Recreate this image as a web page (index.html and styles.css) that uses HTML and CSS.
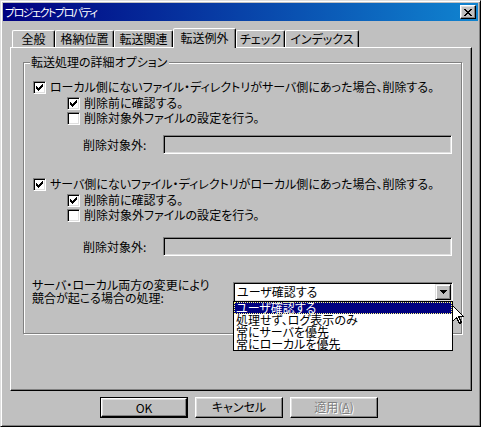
FILE: index.html
```html
<!DOCTYPE html>
<html lang="ja">
<head>
    <meta charset="UTF-8">
    <title>プロジェクトプロパティ</title>
    <link rel="stylesheet" href="styles.css">
</head>
<body>
    <div class="window">
        <div class="titlebar">
            <span class="title">プロジェクトプロパティ</span>
            <span class="close-btn">
                <svg width="8" height="7" viewBox="0 0 8 7" shape-rendering="crispEdges">
                    <path d="M0 0h2v1H0z M6 0h2v1H6z M1 1h2v1H1z M5 1h2v1H5z M2 2h4v1H2z M3 3h2v1H3z M2 4h4v1H2z M1 5h2v1H1z M5 5h2v1H5z M0 6h2v1H0z M6 6h2v1H6z" fill="#000"/>
                </svg>
            </span>
        </div>

        <div class="content">
            <div class="tabs">
                <div class="tab tab-general">全般</div>
                <div class="tab tab-store">格納位置</div>
                <div class="tab tab-transfer">転送関連</div>
                <div class="tab tab-except active">転送例外</div>
                <div class="tab tab-check">チェック</div>
                <div class="tab tab-index">インデックス</div>
            </div>

            <div class="panel">
                <div class="group">
                    <span class="group-title">転送処理の詳細オプション</span>

                    <div class="check-row main first">
                        <span class="cb checked"><svg width="7" height="7" viewBox="0 0 7 7" shape-rendering="crispEdges"><path d="M0 2h1v3H0z M1 3h1v3H1z M2 4h1v3H2z M3 3h1v3H3z M4 2h1v3H4z M5 1h1v3H5z M6 0h1v3H6z" fill="#000"/></svg></span>
                        <span>ローカル側にないファイル・ディレクトリがサーバ側にあった場合、削除する。</span>
                    </div>
                    <div class="check-row sub top">
                        <span class="cb checked"><svg width="7" height="7" viewBox="0 0 7 7" shape-rendering="crispEdges"><path d="M0 2h1v3H0z M1 3h1v3H1z M2 4h1v3H2z M3 3h1v3H3z M4 2h1v3H4z M5 1h1v3H5z M6 0h1v3H6z" fill="#000"/></svg></span>
                        <span>削除前に確認する。</span>
                    </div>
                    <div class="check-row sub">
                        <span class="cb"></span>
                        <span>削除対象外ファイルの設定を行う。</span>
                    </div>
                    <div class="field-row first">
                        <span class="field-label">削除対象外:</span>
                        <span class="edit"></span>
                    </div>

                    <div class="check-row main second">
                        <span class="cb checked"><svg width="7" height="7" viewBox="0 0 7 7" shape-rendering="crispEdges"><path d="M0 2h1v3H0z M1 3h1v3H1z M2 4h1v3H2z M3 3h1v3H3z M4 2h1v3H4z M5 1h1v3H5z M6 0h1v3H6z" fill="#000"/></svg></span>
                        <span>サーバ側にないファイル・ディレクトリがローカル側にあった場合、削除する。</span>
                    </div>
                    <div class="check-row sub top">
                        <span class="cb checked"><svg width="7" height="7" viewBox="0 0 7 7" shape-rendering="crispEdges"><path d="M0 2h1v3H0z M1 3h1v3H1z M2 4h1v3H2z M3 3h1v3H3z M4 2h1v3H4z M5 1h1v3H5z M6 0h1v3H6z" fill="#000"/></svg></span>
                        <span>削除前に確認する。</span>
                    </div>
                    <div class="check-row sub">
                        <span class="cb"></span>
                        <span>削除対象外ファイルの設定を行う。</span>
                    </div>
                    <div class="field-row second">
                        <span class="field-label">削除対象外:</span>
                        <span class="edit"></span>
                    </div>

                    <div class="conflict-row">
                        <div class="conflict-label">サーバ・ローカル両方の変更により<br>競合が起こる場合の処理:</div>
                        <div class="combo">
                            <span class="combo-text">ユーザ確認する</span>
                            <span class="combo-btn">
                                <svg width="7" height="4" viewBox="0 0 7 4" shape-rendering="crispEdges"><path d="M0 0h7v1H0z M1 1h5v1H1z M2 2h3v1H2z M3 3h1v1H3z" fill="#000"/></svg>
                            </span>
                            <ul class="combo-list">
                                <li class="selected">ユーザ確認する</li>
                                <li>処理せず、ログ表示のみ</li>
                                <li>常にサーバを優先</li>
                                <li>常にローカルを優先</li>
                            </ul>
                        </div>
                    </div>
                </div>
            </div>

            <div class="buttons">
                <span class="btn default"><span class="btn-face">OK</span></span>
                <span class="btn"><span class="btn-face">キャンセル</span></span>
                <span class="btn disabled"><span class="btn-face">適用(<u>A</u>)</span></span>
            </div>
        </div>

        <svg class="cursor" width="12" height="19" viewBox="0 0 12 19" shape-rendering="crispEdges">
            <path d="M0.5 0.5 V16.5 L4.5 12.5 L7.5 18.5 L9.5 17.5 L6.5 11.5 H11.5 Z" fill="#fff" stroke="#000" stroke-width="1"/>
        </svg>
    </div>
</body>
</html>
```

FILE: styles.css
```css
:root {
    --face: #c0c0c0;
    --light: #dfdfdf;
    --shadow: #808080;
    --title-left: #000080;
    --title-right: #1084d0;
}
html, body {
    margin: 0;
    padding: 0;
    background: var(--face);
}
body {
    font-family: "Noto Sans CJK JP", "Noto Sans", sans-serif;
    font-size: 12px;
    line-height: 14px;
    color: #000;
    font-feature-settings: "palt";
}
.window {
    position: relative;
    width: 481px;
    height: 427px;
    box-sizing: border-box;
    border: 1px solid;
    border-color: var(--light) #000 #000 var(--light);
    box-shadow: inset 1px 1px 0 #fff, inset -1px -1px 0 var(--shadow);
    padding: 2px;
    display: flex;
    flex-direction: column;
}
.titlebar {
    height: 18px;
    display: flex;
    align-items: center;
    justify-content: space-between;
    background: linear-gradient(to right, var(--title-left), var(--title-right));
    padding: 0 2px 0 2px;
}
.title {
    color: #fff;
    font-size: 11px;
    line-height: 18px;
    letter-spacing: -1.5px;
}
.close-btn {
    width: 16px;
    height: 14px;
    box-sizing: border-box;
    background: var(--face);
    border: 1px solid;
    border-color: #fff #000 #000 #fff;
    box-shadow: inset -1px -1px 0 var(--shadow), inset 1px 1px 0 var(--light);
    display: flex;
    align-items: center;
    justify-content: center;
}
.close-btn svg {
    display: block;
}
.content {
    flex: 1;
    display: flex;
    flex-direction: column;
    padding: 0 6px 0 7px;
}
.tabs {
    display: flex;
    align-items: flex-end;
    height: 19px;
    margin-top: 7px;
    padding-left: 2px;
}
.tab {
    height: 17px;
    box-sizing: border-box;
    border: 1px solid;
    border-bottom: none;
    border-color: #fff #000 transparent #fff;
    border-radius: 2px 2px 0 0;
    box-shadow: inset -1px 0 0 var(--shadow);
    text-align: center;
    line-height: 16px;
    white-space: nowrap;
}
.tab-general { width: 43px; }
.tab-store { width: 59px; }
.tab-transfer { width: 59px; }
.tab-except { width: 63px; }
.tab-check { width: 49px; }
.tab-index { width: 74px; }
.tab.active {
    position: relative;
    z-index: 1;
    height: 20px;
    margin-bottom: -1px;
    background: var(--face);
    line-height: 17px;
}
.panel {
    height: 344px;
    box-sizing: border-box;
    border: 1px solid;
    border-color: #fff #000 #000 #fff;
    box-shadow: inset -1px -1px 0 var(--shadow);
    padding: 14px 9px 0 12px;
}
.group {
    position: relative;
    height: 272px;
    box-sizing: border-box;
    border: 1px solid var(--shadow);
    box-shadow: inset 1px 1px 0 #fff, 1px 1px 0 #fff;
    padding-left: 9px;
}
.group-title {
    position: absolute;
    top: -8px;
    left: 6px;
    padding: 0 2px 0 1px;
    background: var(--face);
    line-height: 14px;
}
.check-row {
    display: flex;
    align-items: center;
    height: 14px;
    white-space: nowrap;
}
.check-row.main.first { margin-top: 17px; }
.check-row.main.second { margin-top: 23px; }
.check-row.sub { padding-left: 34px; margin-top: 1px; }
.check-row.sub.top { margin-top: 2px; }
.cb {
    width: 13px;
    height: 13px;
    box-sizing: border-box;
    flex: none;
    background: #fff;
    border: 1px solid;
    border-color: var(--shadow) #fff #fff var(--shadow);
    box-shadow: inset 1px 1px 0 #000, inset -1px -1px 0 var(--light);
    display: flex;
    align-items: center;
    justify-content: center;
    margin-right: 4px;
}
.cb svg {
    display: block;
}
.field-row {
    display: flex;
    align-items: center;
    padding-left: 50px;
    height: 19px;
}
.field-row.first { margin-top: 10px; }
.field-row.second { margin-top: 15px; }
.field-label {
    width: 80px;
}
.edit {
    width: 289px;
    height: 19px;
    box-sizing: border-box;
    border: 1px solid;
    border-color: var(--shadow) #fff #fff var(--shadow);
    box-shadow: inset 1px 1px 0 #000, inset -1px -1px 0 var(--light);
}
.conflict-row {
    display: flex;
    align-items: flex-start;
    margin-top: 22px;
}
.conflict-label {
    width: 201px;
    line-height: 13px;
    white-space: nowrap;
    margin-left: -1px;
}
.combo {
    position: relative;
    width: 220px;
    height: 20px;
    margin-top: 4px;
    box-sizing: border-box;
    background: #fff;
    border: 1px solid;
    border-color: var(--shadow) #fff #fff var(--shadow);
    box-shadow: inset 1px 1px 0 #000, inset -1px -1px 0 var(--light);
    display: flex;
    align-items: center;
    justify-content: space-between;
    padding: 1px 1px 1px 3px;
}
.combo-text {
    line-height: 14px;
}
.combo-btn {
    width: 16px;
    height: 16px;
    box-sizing: border-box;
    background: var(--face);
    border: 1px solid;
    border-color: var(--light) #000 #000 var(--light);
    box-shadow: inset 1px 1px 0 #fff, inset -1px -1px 0 var(--shadow);
    display: flex;
    align-items: center;
    justify-content: center;
}
.combo-btn svg {
    display: block;
}
.combo-list {
    position: absolute;
    top: 100%;
    left: -1px;
    width: 220px;
    box-sizing: border-box;
    margin: 0;
    padding: 0;
    list-style: none;
    background: #fff;
    border: 1px solid #000;
    z-index: 2;
}
.combo-list li {
    height: 12px;
    line-height: 12px;
    font-size: 12px;
    padding-left: 2px;
    white-space: nowrap;
}
.combo-list li.selected {
    background: #000080;
    color: #fff;
    outline: 1px dotted #ffff80;
    outline-offset: -1px;
}
.buttons {
    display: flex;
    justify-content: center;
    gap: 7px;
    margin-top: 6px;
    padding-right: 4px;
}
.btn {
    width: 88px;
    height: 21px;
    box-sizing: border-box;
    display: flex;
}
.btn-face {
    flex: 1;
    box-sizing: border-box;
    background: var(--face);
    border: 1px solid;
    border-color: #fff #000 #000 #fff;
    box-shadow: inset -1px -1px 0 var(--shadow), inset 1px 1px 0 var(--light);
    text-align: center;
    line-height: 18px;
}
.btn.default {
    border: 1px solid #000;
}
.btn.disabled .btn-face {
    color: var(--shadow);
    text-shadow: 1px 1px 0 #fff;
}
.cursor {
    position: absolute;
    left: 451px;
    top: 304px;
    z-index: 3;
}
```
